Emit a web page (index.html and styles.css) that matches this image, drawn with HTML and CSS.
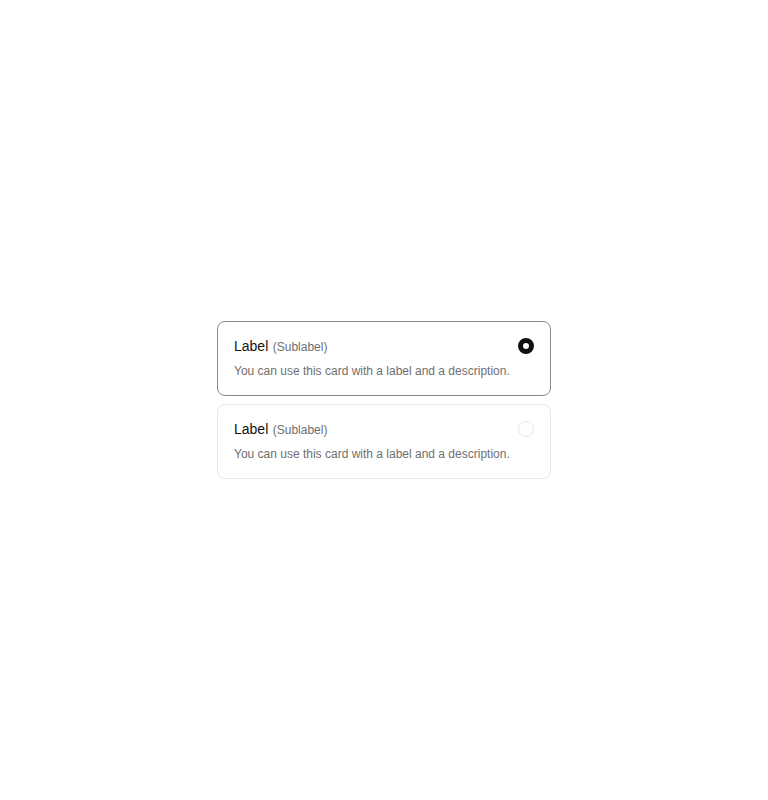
FILE: index.html
```html
<!DOCTYPE html>
<html>
<head>
<meta charset="utf-8">
<link rel="stylesheet" href="styles.css">
</head>
<body>
<div class="page">
  <div class="group">
    <label class="card card-selected">
      <div class="text">
        <div class="title"><span class="label">Label</span> <span class="sublabel">(Sublabel)</span></div>
        <div class="desc">You can use this card with a label and a description.</div>
      </div>
      <span class="radio radio-on"></span>
    </label>
    <label class="card">
      <div class="text">
        <div class="title"><span class="label">Label</span> <span class="sublabel">(Sublabel)</span></div>
        <div class="desc">You can use this card with a label and a description.</div>
      </div>
      <span class="radio"></span>
    </label>
  </div>
</div>
</body>
</html>
```
FILE: styles.css
```css
html, body {
  margin: 0;
  padding: 0;
  background: #fff;
}
body {
  font-family: "Liberation Sans", Arial, sans-serif;
}
.page {
  width: 768px;
  height: 800px;
  display: flex;
  align-items: center;
  justify-content: center;
}
.group {
  width: 334px;
  display: flex;
  flex-direction: column;
  gap: 8px;
}
.card {
  display: flex;
  justify-content: space-between;
  align-items: flex-start;
  border: 1px solid #e8e8e8;
  border-radius: 8px;
  padding: 14px 16px 16px 16px;
  box-sizing: border-box;
  height: 75px;
}
.card-selected {
  border-color: #8a8a8a;
}
.text {
  display: flex;
  flex-direction: column;
  gap: 6px;
}
.title {
  line-height: 20px;
}
.label {
  font-size: 14px;
  color: #111;
}
.sublabel {
  font-size: 12px;
  color: #6f6f6f;
}
.desc {
  font-size: 12px;
  line-height: 16px;
  color: #6f6f6f;
}
.radio {
  width: 16px;
  height: 16px;
  border-radius: 50%;
  border: 1px solid #e6e6e6;
  box-sizing: border-box;
  margin-top: 2px;
  flex: none;
}
.radio-on {
  border: 5px solid #111;
  background: #fff;
}
```
